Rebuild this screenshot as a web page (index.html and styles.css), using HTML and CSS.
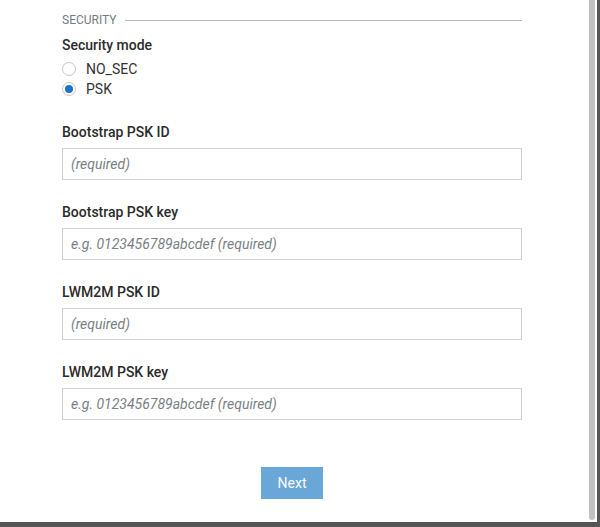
FILE: index.html
```html
<!DOCTYPE html>
<html>
<head>
<meta charset="utf-8">
<link rel="stylesheet" href="styles.css">
</head>
<body>
<div class="modal">
  <div class="content">
    <div class="section-title"><span>SECURITY</span><div class="rule"></div></div>
    <div class="label mode-label">Security mode</div>
    <div class="radios">
      <label class="radio-row"><span class="radio"></span>NO_SEC</label>
      <label class="radio-row"><span class="radio checked"></span>PSK</label>
    </div>
    <div class="group">
      <div class="label">Bootstrap PSK ID</div>
      <div class="input"><span class="ph">(required)</span></div>
    </div>
    <div class="group">
      <div class="label">Bootstrap PSK key</div>
      <div class="input"><span class="ph">e.g. 0123456789abcdef (required)</span></div>
    </div>
    <div class="group">
      <div class="label">LWM2M PSK ID</div>
      <div class="input"><span class="ph">(required)</span></div>
    </div>
    <div class="group">
      <div class="label">LWM2M PSK key</div>
      <div class="input"><span class="ph">e.g. 0123456789abcdef (required)</span></div>
    </div>
    <div class="actions"><button class="btn">Next</button></div>
  </div>
  <div class="scroll-thumb"></div>
</div>
</body>
</html>
```
FILE: styles.css
```css
html, body {
  margin: 0;
  padding: 0;
  background: #555555;
  font-family: Roboto, "Liberation Sans", sans-serif;
}
.modal {
  position: relative;
  width: 597px;
  height: 522px;
  background: #ffffff;
  overflow: hidden;
}
.content {
  width: 460px;
  padding: 13px 0 0 62px;
}
.section-title {
  display: flex;
  align-items: center;
  gap: 8px;
  height: 14px;
  font-size: 12px;
  color: #777b80;
}
.rule {
  flex: 1;
  height: 1px;
  background: #b5b5b5;
}
.label {
  font-size: 14px;
  font-weight: 500;
  line-height: 20px;
  color: #2b2b2b;
}
.mode-label {
  margin-top: 8px;
  margin-bottom: 4px;
}
.radios {
  display: flex;
  flex-direction: column;
}
.radio-row {
  display: flex;
  align-items: center;
  height: 20px;
  font-size: 14px;
  color: #333;
}
.radio {
  box-sizing: border-box;
  width: 14px;
  height: 14px;
  border: 1px solid #c8c8c8;
  border-radius: 50%;
  margin-left: 0;
  margin-right: 10px;
  display: flex;
  align-items: center;
  justify-content: center;
}
.radio.checked::after {
  content: "";
  width: 8px;
  height: 8px;
  border-radius: 50%;
  background: #1c74c9;
}
.group {
  margin-top: 23px;
}
.group + .group {
  margin-top: 22px;
}
.input {
  box-sizing: border-box;
  margin-top: 6px;
  height: 32px;
  border: 1px solid #cdd0d3;
  padding: 0 8px;
  display: flex;
  align-items: center;
}
.ph {
  font-size: 14px;
  font-style: italic;
  color: #7a7f85;
}
.actions {
  display: flex;
  justify-content: center;
  margin-top: 47px;
}
.btn {
  width: 62px;
  height: 32px;
  border: none;
  background: #68a7d8;
  color: #ffffff;
  font-family: Roboto, "Liberation Sans", sans-serif;
  font-size: 14px;
  padding: 0;
}
.scroll-thumb {
  position: absolute;
  left: 589px;
  top: -4px;
  width: 6px;
  height: 524px;
  background: #c1c1c1;
  border-radius: 3px;
}
```
